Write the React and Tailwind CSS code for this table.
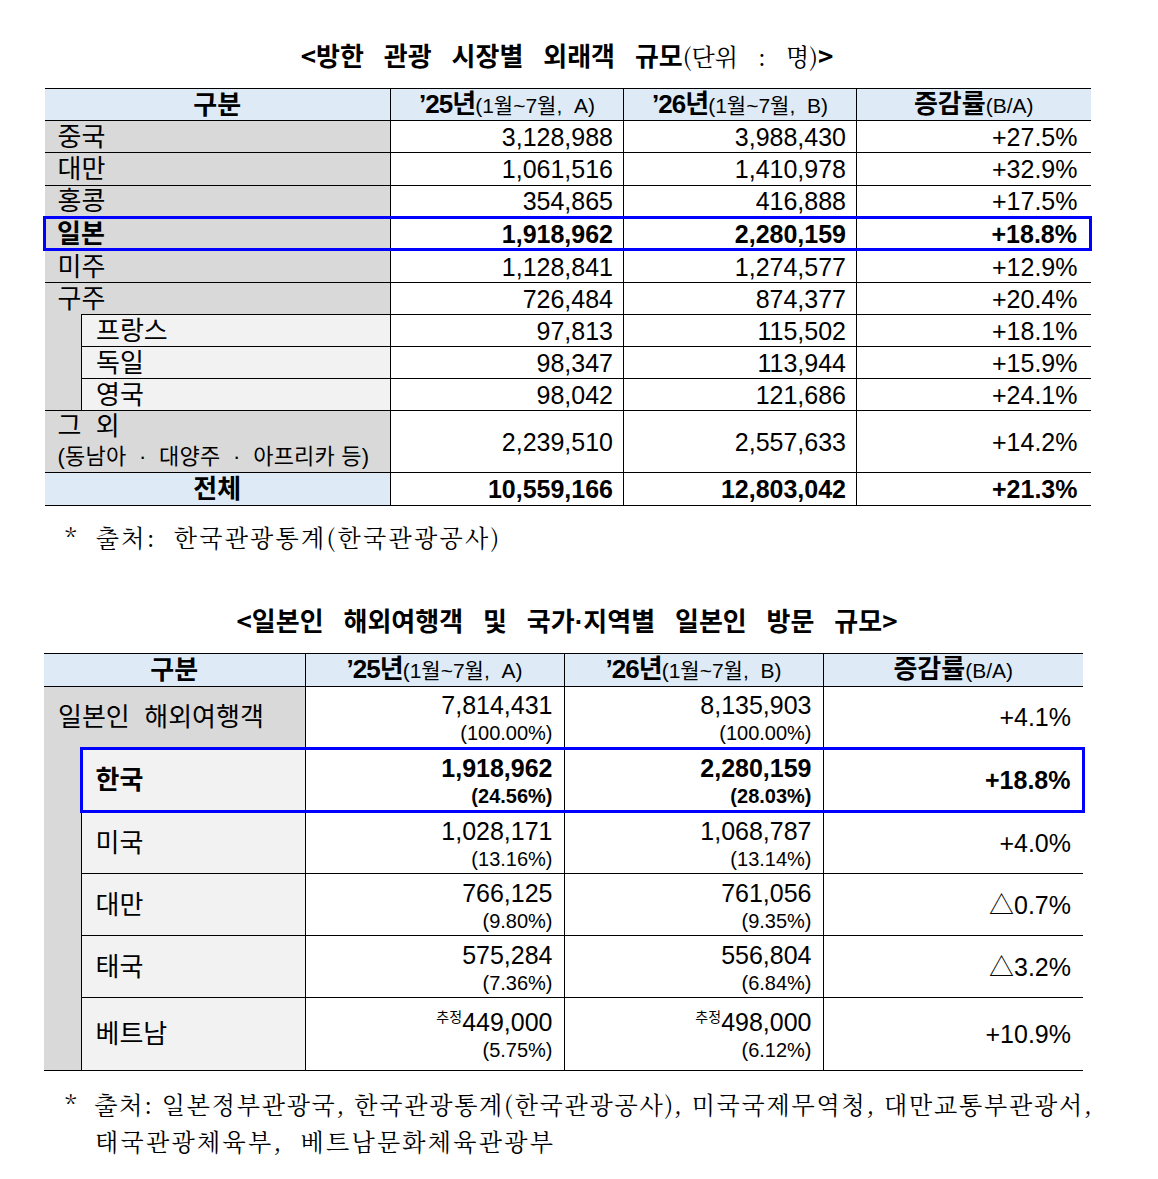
import React from "react";

const FONT = "font-['Liberation_Sans','Noto_Sans_CJK_KR',sans-serif]";
const SERIF = "font-['Noto_Serif_CJK_KR','Liberation_Serif','Noto_Sans_CJK_KR',serif]";

// name, '25, '26, rate, highlighted, tall row
const market = [
  ["중국", "3,128,988", "3,988,430", "+27.5%"],
  ["대만", "1,061,516", "1,410,978", "+32.9%", false, true],
  ["홍콩", "354,865", "416,888", "+17.5%"],
  ["일본", "1,918,962", "2,280,159", "+18.8%", true],
  ["미주", "1,128,841", "1,274,577", "+12.9%", false, true],
];

const europe = [
  ["프랑스", "97,813", "115,502", "+18.1%"],
  ["독일", "98,347", "113,944", "+15.9%"],
  ["영국", "98,042", "121,686", "+24.1%"],
];

const japan = [
  ["한국", "1,918,962", "(24.56%)", "2,280,159", "(28.03%)", "+18.8%", true],
  ["미국", "1,028,171", "(13.16%)", "1,068,787", "(13.14%)", "+4.0%"],
  ["대만", "766,125", "(9.80%)", "761,056", "(9.35%)", "△0.7%"],
  ["태국", "575,284", "(7.36%)", "556,804", "(6.84%)", "△3.2%"],
];

const YearHead = ({ y, sub }) => (
  <>
    <span className="text-[26px] font-bold tracking-[-1px]">’{y}년</span>
    <span className="text-[21px]">(1월~7월,&nbsp; {sub})</span>
  </>
);

const RateHead = () => (
  <>
    <span className="text-[26px] font-bold">증감률</span>
    <span className="text-[21px]">(B/A)</span>
  </>
);

const MarketTable = () => (
  <table className="-ml-[1px] w-[1048px] table-fixed border-collapse text-[25px] leading-[28px] text-black">
    <colgroup>
      <col className="w-[37px]" />
      <col className="w-[309px]" />
      <col className="w-[233px]" />
      <col className="w-[233px]" />
      <col className="w-[234px]" />
    </colgroup>
    <thead>
      <tr className="h-[32px] bg-[#deebf7]">
        <th colSpan={2} className="border-y border-r border-black text-[26px] font-bold">구분</th>
        <th className="border-y border-r border-black font-normal"><YearHead y="25" sub="A" /></th>
        <th className="border-y border-r border-black font-normal"><YearHead y="26" sub="B" /></th>
        <th className="border-y border-black font-normal"><RateHead /></th>
      </tr>
    </thead>
    <tbody>
      {market.map(([name, a, b, r, hl, tall]) =>
        hl ? (
          <tr key={name} className="h-[32px] font-bold">
            <td colSpan={2} className="bg-[#d9d9d9] border-y-[3px] border-y-[#0000ff] border-l-[3px] border-l-[#0000ff] border-r border-r-black pl-[11px] text-[26px]">{name}</td>
            <td className="border-y-[3px] border-y-[#0000ff] border-r border-r-black pr-[10px] text-right">{a}</td>
            <td className="border-y-[3px] border-y-[#0000ff] border-r border-r-black pr-[10px] text-right">{b}</td>
            <td className="border-y-[3px] border-y-[#0000ff] border-r-[3px] border-r-[#0000ff] pr-[12px] text-right">{r}</td>
          </tr>
        ) : (
          <tr key={name} className={tall ? "h-[33px]" : "h-[32px]"}>
            <td colSpan={2} className="bg-[#d9d9d9] border-y border-r border-black pl-[13px] text-[26px]">{name}</td>
            <td className="border-y border-r border-black pr-[10px] text-right">{a}</td>
            <td className="border-y border-r border-black pr-[10px] text-right">{b}</td>
            <td className="border-y border-black pr-[13px] text-right">{r}</td>
          </tr>
        )
      )}
      <tr className="h-[32px]">
        <td colSpan={2} className="bg-[#d9d9d9] border-t border-r border-black pl-[13px] text-[26px]">구주</td>
        <td className="border-y border-r border-black pr-[10px] text-right">726,484</td>
        <td className="border-y border-r border-black pr-[10px] text-right">874,377</td>
        <td className="border-y border-black pr-[13px] text-right">+20.4%</td>
      </tr>
      {europe.map(([name, a, b, r], i) => (
        <tr key={name} className="h-[32px]">
          {i === 0 && <td rowSpan={3} className="bg-[#d9d9d9] border-r border-black" />}
          <td className="bg-[#f2f2f2] border-y border-r border-black pl-[14px] text-[26px]">{name}</td>
          <td className="border-y border-r border-black pr-[10px] text-right">{a}</td>
          <td className="border-y border-r border-black pr-[10px] text-right">{b}</td>
          <td className="border-y border-black pr-[13px] text-right">{r}</td>
        </tr>
      ))}
      <tr className="h-[62px]">
        <td colSpan={2} className="bg-[#d9d9d9] border-y border-r border-black pl-[13px]">
          <div className="text-[26px] leading-[31px]">그&nbsp;&nbsp;외</div>
          <div className="text-[22px] leading-[30px] tracking-[0.2px] whitespace-nowrap">(동남아&nbsp; ·&nbsp; 대양주&nbsp; ·&nbsp; 아프리카 등)</div>
        </td>
        <td className="border-y border-r border-black pr-[10px] text-right">2,239,510</td>
        <td className="border-y border-r border-black pr-[10px] text-right">2,557,633</td>
        <td className="border-y border-black pr-[13px] text-right">+14.2%</td>
      </tr>
      <tr className="h-[33px] font-bold">
        <td colSpan={2} className="bg-[#deebf7] border-y border-r border-black text-center text-[26px]">전체</td>
        <td className="border-y border-r border-black pr-[10px] text-right">10,559,166</td>
        <td className="border-y border-r border-black pr-[10px] text-right">12,803,042</td>
        <td className="border-y border-black pr-[13px] text-right">+21.3%</td>
      </tr>
    </tbody>
  </table>
);

const Share = ({ n, p, est }) => (
  <div className="pt-[4px] text-right">
    <div className="text-[25px] leading-[28px]">
      {est && <span className="align-super text-[14px] leading-none">추정</span>}
      {n}
    </div>
    <div className="text-[20px] leading-[28px]">{p}</div>
  </div>
);

const JapanTable = () => (
  <table className="w-[1039px] table-fixed border-collapse text-[25px] leading-[28px] text-black">
    <colgroup>
      <col className="w-[37px]" />
      <col className="w-[224px]" />
      <col className="w-[259px]" />
      <col className="w-[259px]" />
      <col className="w-[260px]" />
    </colgroup>
    <thead>
      <tr className="h-[33px] bg-[#deebf7]">
        <th colSpan={2} className="border-y border-r border-black text-[26px] font-bold">구분</th>
        <th className="border-y border-r border-black font-normal"><YearHead y="25" sub="A" /></th>
        <th className="border-y border-r border-black font-normal"><YearHead y="26" sub="B" /></th>
        <th className="border-y border-black font-normal"><RateHead /></th>
      </tr>
    </thead>
    <tbody>
      <tr className="h-[62px]">
        <td colSpan={2} className="bg-[#d9d9d9] border-t border-r border-black pl-[14px] text-[26px] whitespace-nowrap">일본인&nbsp; 해외여행객</td>
        <td className="border-y border-r border-black pr-[11px]"><Share n="7,814,431" p="(100.00%)" /></td>
        <td className="border-y border-r border-black pr-[11px]"><Share n="8,135,903" p="(100.00%)" /></td>
        <td className="border-y border-black pr-[12px] text-right">+4.1%</td>
      </tr>
      {japan.map(([name, a, ap, b, bp, r, hl]) =>
        hl ? (
          <tr key={name} className="h-[62px] font-bold">
            <td rowSpan={5} className="bg-[#d9d9d9] border-b border-r border-black" />
            <td className="bg-[#f2f2f2] border-y-[3px] border-y-[#0000ff] border-l-[3px] border-l-[#0000ff] border-r border-r-black pl-[13px] text-[26px]">{name}</td>
            <td className="border-y-[3px] border-y-[#0000ff] border-r border-r-black pr-[11px]"><Share n={a} p={ap} /></td>
            <td className="border-y-[3px] border-y-[#0000ff] border-r border-r-black pr-[11px]"><Share n={b} p={bp} /></td>
            <td className="border-y-[3px] border-y-[#0000ff] border-r-[3px] border-r-[#0000ff] pr-[11px] text-right">{r}</td>
          </tr>
        ) : (
          <tr key={name} className="h-[62px]">
            <td className="bg-[#f2f2f2] border-y border-r border-black pl-[14px] text-[26px]">{name}</td>
            <td className="border-y border-r border-black pr-[11px]"><Share n={a} p={ap} /></td>
            <td className="border-y border-r border-black pr-[11px]"><Share n={b} p={bp} /></td>
            <td className="border-y border-black pr-[12px] text-right">{r}</td>
          </tr>
        )
      )}
      <tr className="h-[73px]">
        <td className="bg-[#f2f2f2] border-y border-r border-black pl-[14px] text-[26px]">베트남</td>
        <td className="border-y border-r border-black pr-[11px]"><Share n="449,000" p="(5.75%)" est /></td>
        <td className="border-y border-r border-black pr-[11px]"><Share n="498,000" p="(6.12%)" est /></td>
        <td className="border-y border-black pr-[12px] text-right">+10.9%</td>
      </tr>
    </tbody>
  </table>
);

export default function App() {
  return (
    <div className={`w-[1158px] min-h-[1179px] bg-white pt-[38px] text-black ${FONT}`}>
      <div className="ml-[44px] w-[1046px]">
        <h2 className="mb-[15px] text-center text-[26px] leading-[34px] font-bold [word-spacing:14px] font-['Noto_Sans_CJK_KR',sans-serif]">
          &lt;방한 관광 시장별 외래객 규모
          <span className={`text-[24px] font-normal ${SERIF}`}>(단위 : 명)</span>&gt;
        </h2>
        <MarketTable />
        <p className={`mt-[14px] pl-[21px] text-[24px] leading-[34px] tracking-[2.3px] ${SERIF}`}>
          *&nbsp; 출처:&nbsp; 한국관광통계(한국관광공사)
        </p>
        <h2 className="mt-[49px] mb-[14px] text-center text-[26px] leading-[34px] font-bold [word-spacing:14px] font-['Noto_Sans_CJK_KR',sans-serif]">
          &lt;일본인 해외여행객 및 국가<span className="font-['Liberation_Sans',sans-serif]">·</span>지역별 일본인 방문 규모&gt;
        </h2>
        <JapanTable />
        <p className={`mt-[14px] pl-[51px] -indent-[30px] text-[24px] leading-[37px] whitespace-nowrap ${SERIF}`}>
          <span className="tracking-[1.8px]">*&nbsp; 출처: 일본정부관광국, 한국관광통계(한국관광공사), 미국국제무역청, 대만교통부관광서,</span>
          <br />
          <span className="tracking-[2.3px]">태국관광체육부,&nbsp; 베트남문화체육관광부</span>
        </p>
      </div>
    </div>
  );
}
